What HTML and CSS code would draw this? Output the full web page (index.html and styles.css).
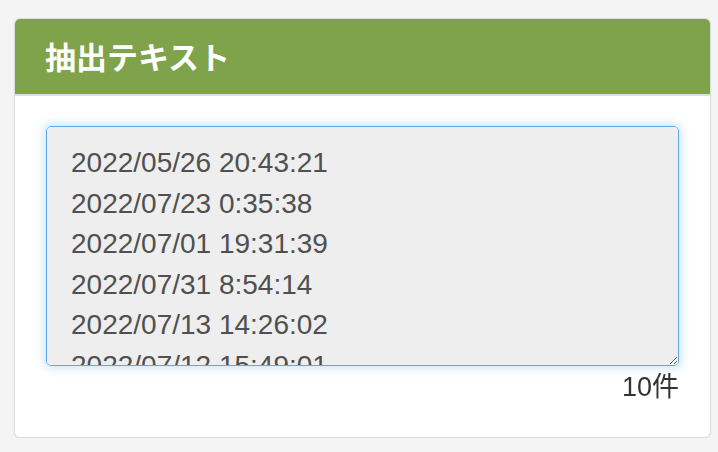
FILE: index.html
```html
<!DOCTYPE html>
<html lang="ja">
<head>
<meta charset="utf-8">
<title>抽出テキスト</title>
<link rel="stylesheet" href="styles.css">
</head>
<body>
<div class="card">
  <div class="card-header">抽出テキスト</div>
  <div class="card-body">
    <textarea class="output" readonly>2022/05/26 20:43:21
2022/07/23 0:35:38
2022/07/01 19:31:39
2022/07/31 8:54:14
2022/07/13 14:26:02
2022/07/12 15:49:01
2022/06/18 11:02:47
2022/05/30 22:17:09
2022/07/05 6:41:55
2022/06/09 13:08:30</textarea>
    <div class="count">10件</div>
  </div>
</div>
</body>
</html>
```

FILE: styles.css
```css
html, body {
  margin: 0;
  padding: 0;
}
body {
  background: #f4f4f4;
  font-family: "Liberation Sans", "Noto Sans CJK JP", sans-serif;
  color: #333;
}
.card {
  margin: 18px 0 0 14px;
  width: 697px;
  height: 420px;
  box-sizing: border-box;
  background: #fff;
  border: 1px solid #dcdcdc;
  border-radius: 6px;
  box-shadow: 0 1px 2px rgba(0,0,0,0.06);
  overflow: hidden;
}
.card-header {
  background: #7fa34a;
  color: #fff;
  height: 77px;
  box-sizing: border-box;
  border-bottom: 2px solid #dedede;
  padding: 0 0 2px 30px;
  display: flex;
  align-items: center;
  font-family: "Noto Sans CJK JP", sans-serif;
  font-size: 31px;
  font-weight: 700;
}
.card-body {
  padding: 30px 31px 0 31px;
  display: flex;
  flex-direction: column;
}
.output {
  display: block;
  width: 633px;
  height: 240px;
  box-sizing: border-box;
  margin: 0;
  padding: 16px 24px 0 24px;
  background: #eeeeee;
  border: 1px solid #5fa8e6;
  border-radius: 5px;
  box-shadow: 0 0 10px 2px rgba(102,175,233,0.35);
  outline: none;
  font-family: "Liberation Sans", sans-serif;
  font-size: 28px;
  line-height: 40.5px;
  color: #505050;
  resize: vertical;
  scrollbar-width: none;
}
.count {
  align-self: flex-end;
  font-size: 27px;
  line-height: 34px;
  margin-top: 4px;
  color: #333;
}
```
